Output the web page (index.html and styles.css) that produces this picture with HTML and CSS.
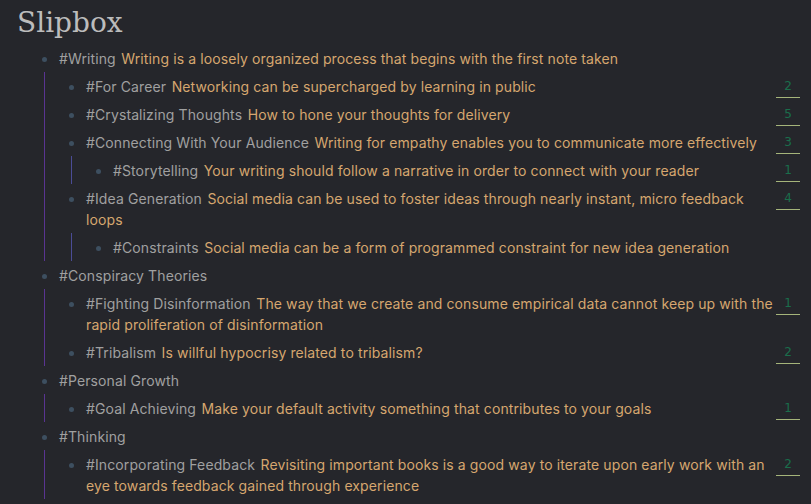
FILE: index.html
```html
<!DOCTYPE html>
<html lang="en">
<head>
<meta charset="utf-8">
<title>Slipbox</title>
<link rel="stylesheet" href="styles.css">
</head>
<body>
<main class="page">
  <h1 class="title">Slipbox</h1>
  <ul class="tree">
    <li>
      <div class="row"><span class="dot"></span><div class="content"><span class="tag">#Writing</span><span class="note">Writing is a loosely organized process that begins with the first note taken</span></div></div>
      <ul class="tree sub">
        <li><div class="row"><span class="dot"></span><div class="content"><span class="tag">#For Career</span><span class="note">Networking can be supercharged by learning in public</span></div><span class="count">2</span></div></li>
        <li><div class="row"><span class="dot"></span><div class="content"><span class="tag">#Crystalizing Thoughts</span><span class="note">How to hone your thoughts for delivery</span></div><span class="count">5</span></div></li>
        <li>
          <div class="row"><span class="dot"></span><div class="content"><span class="tag">#Connecting With Your Audience</span><span class="note">Writing for empathy enables you to communicate more effectively</span></div><span class="count">3</span></div>
          <ul class="tree sub deep">
            <li><div class="row"><span class="dot"></span><div class="content"><span class="tag">#Storytelling</span><span class="note">Your writing should follow a narrative in order to connect with your reader</span></div><span class="count">1</span></div></li>
          </ul>
        </li>
        <li>
          <div class="row"><span class="dot"></span><div class="content"><span class="tag">#Idea Generation</span><span class="note">Social media can be used to foster ideas through nearly instant, micro feedback loops</span></div><span class="count">4</span></div>
          <ul class="tree sub deep">
            <li><div class="row"><span class="dot"></span><div class="content"><span class="tag">#Constraints</span><span class="note">Social media can be a form of programmed constraint for new idea generation</span></div></div></li>
          </ul>
        </li>
      </ul>
    </li>
    <li>
      <div class="row"><span class="dot"></span><div class="content"><span class="tag">#Conspiracy Theories</span></div></div>
      <ul class="tree sub">
        <li><div class="row"><span class="dot"></span><div class="content"><span class="tag">#Fighting Disinformation</span><span class="note">The way that we create and consume empirical data cannot keep up with the rapid proliferation of disinformation</span></div><span class="count">1</span></div></li>
        <li><div class="row"><span class="dot"></span><div class="content"><span class="tag">#Tribalism</span><span class="note">Is willful hypocrisy related to tribalism?</span></div><span class="count">2</span></div></li>
      </ul>
    </li>
    <li>
      <div class="row"><span class="dot"></span><div class="content"><span class="tag">#Personal Growth</span></div></div>
      <ul class="tree sub">
        <li><div class="row"><span class="dot"></span><div class="content"><span class="tag">#Goal Achieving</span><span class="note">Make your default activity something that contributes to your goals</span></div><span class="count">1</span></div></li>
      </ul>
    </li>
    <li>
      <div class="row"><span class="dot"></span><div class="content"><span class="tag">#Thinking</span></div></div>
      <ul class="tree sub">
        <li><div class="row"><span class="dot"></span><div class="content"><span class="tag">#Incorporating Feedback</span><span class="note">Revisiting important books is a good way to iterate upon early work with an eye towards feedback gained through experience</span></div><span class="count">2</span></div></li>
      </ul>
    </li>
  </ul>
</main>
</body>
</html>
```

FILE: styles.css
```css
html, body {
  margin: 0;
  padding: 0;
  background: #25262b;
}

body {
  font-family: Inter, "Noto Sans", "Liberation Sans", sans-serif;
  font-size: 14px;
  letter-spacing: 0.11px;
  color: #d6a66f;
  overflow: hidden;
}

.page {
  padding: 0 11px 0 16px;
}

.title {
  margin: 5px 0 3px 1px;
  font-family: "DejaVu Serif", "Liberation Serif", serif;
  font-weight: normal;
  font-size: 28px;
  line-height: 36px;
  color: #bcbcbc;
  letter-spacing: 0;
}

.tree {
  list-style: none;
  margin: 0 0 0 26px;
  padding: 0;
}

.tree.sub {
  margin-left: 2px;
  padding-left: 24px;
  border-left: 1px solid #5a3492;
}

.tree.sub.deep {
  border-left-color: #4b4c96;
}

.row {
  display: flex;
  align-items: flex-start;
  padding: 3.5px 0;
  line-height: 21px;
}

.dot {
  flex: none;
  width: 5px;
  height: 5px;
  margin-top: 9.5px;
  margin-right: 12px;
  border-radius: 50%;
  background: #3d4f60;
}

.content {
  flex: 1;
  min-width: 0;
}

.tag {
  color: #a0a0a0;
  margin-right: 5.5px;
}

.note {
  color: #d6a66f;
}

.count {
  flex: none;
  box-sizing: border-box;
  width: 24px;
  height: 22px;
  margin-left: 1px;
  margin-bottom: -1px;
  text-align: center;
  font-family: "DejaVu Sans", sans-serif;
  font-size: 12px;
  line-height: 21px;
  letter-spacing: 0;
  color: #1a6e4b;
  border-bottom: 1px solid #a5b47a;
}
```
